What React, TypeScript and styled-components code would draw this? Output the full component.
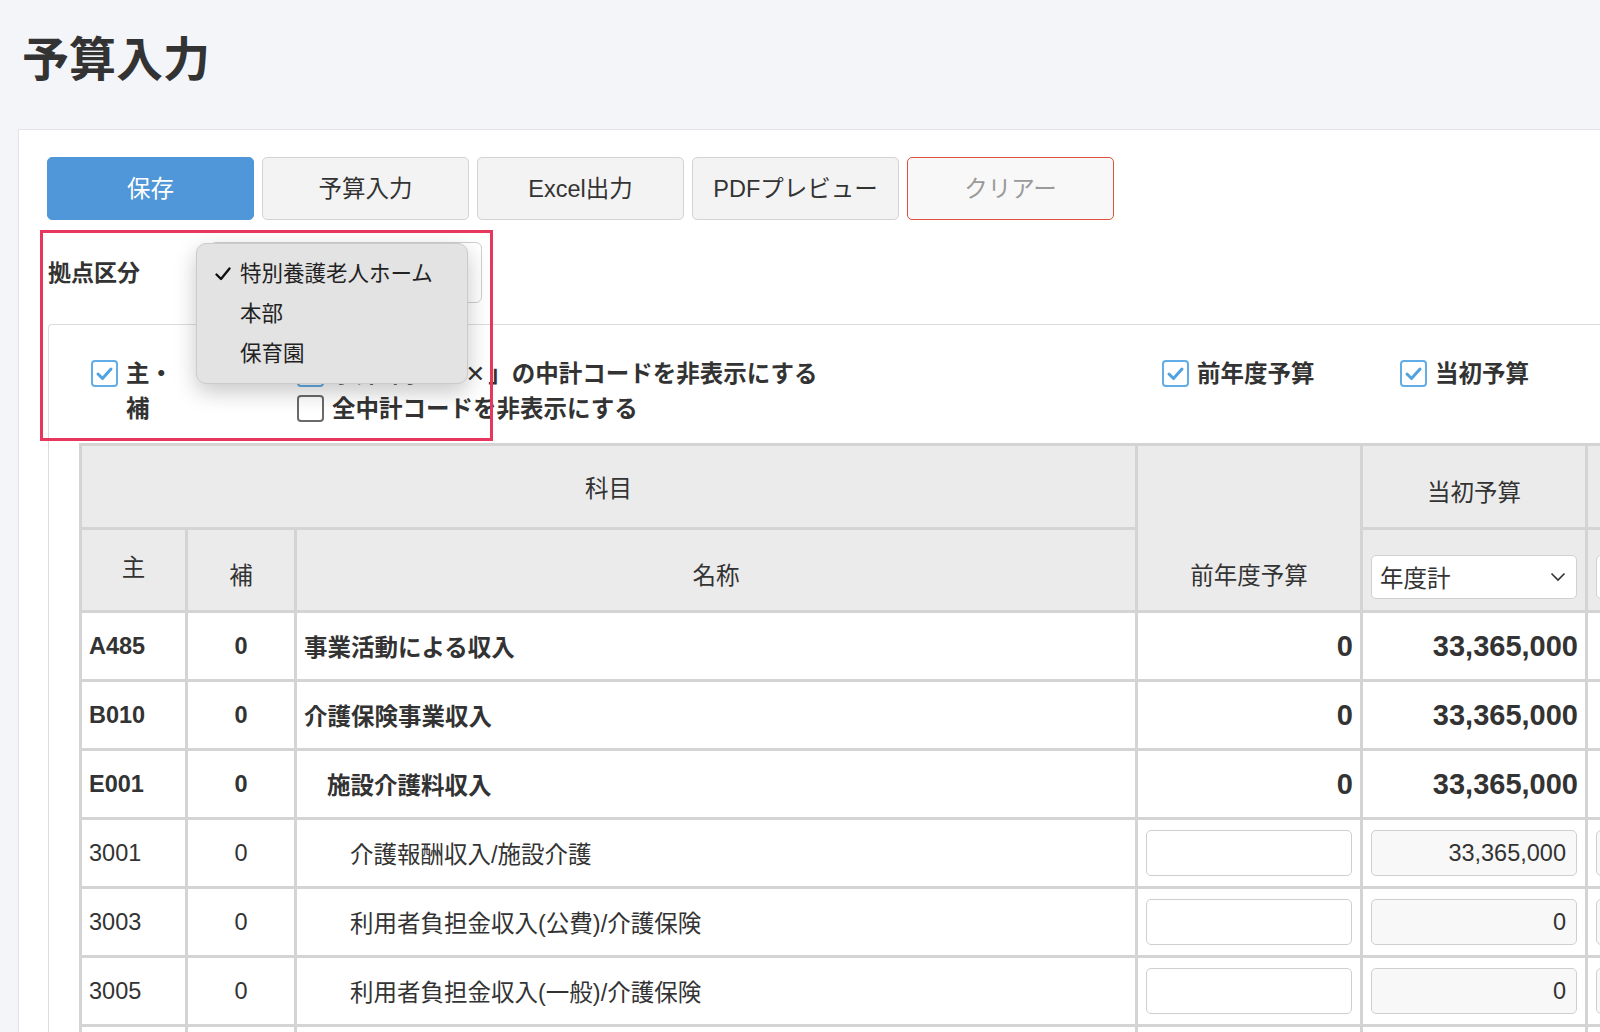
import React from "react";
import styled, { createGlobalStyle } from "styled-components";

const GlobalStyle = createGlobalStyle`
  html, body {
    margin: 0;
    padding: 0;
  }
  body {
    width: 1600px;
    height: 1032px;
    overflow: hidden;
    background: #f4f5f9;
    color: #333;
    font-family: "Liberation Sans", "Noto Sans CJK JP", sans-serif;
  }
`;

interface RowData {
  code: string;
  sub: string;
  name: string;
  level: number;
  prev: string;
  initial: string;
  total: boolean;
}

const rows: RowData[] = [
  { code: "A485", sub: "0", name: "事業活動による収入", level: 0, prev: "0", initial: "33,365,000", total: true },
  { code: "B010", sub: "0", name: "介護保険事業収入", level: 0, prev: "0", initial: "33,365,000", total: true },
  { code: "E001", sub: "0", name: "施設介護料収入", level: 1, prev: "0", initial: "33,365,000", total: true },
  { code: "3001", sub: "0", name: "介護報酬収入/施設介護", level: 2, prev: "", initial: "33,365,000", total: false },
  { code: "3003", sub: "0", name: "利用者負担金収入(公費)/介護保険", level: 2, prev: "", initial: "0", total: false },
  { code: "3005", sub: "0", name: "利用者負担金収入(一般)/介護保険", level: 2, prev: "", initial: "0", total: false },
  { code: "3007", sub: "0", name: "利用者等利用料収入/施設介護", level: 2, prev: "", initial: "0", total: false },
];

const Check = ({ on }: { on: boolean }) => (
  <Box $on={on}>
    {on && (
      <svg width="21" height="21" viewBox="0 0 21 21">
        <path d="M4 11 L8.5 15.5 L17 6" fill="none" stroke="#4fa3e0" strokeWidth="3" strokeLinecap="round" strokeLinejoin="round" />
      </svg>
    )}
  </Box>
);

const Chevron = () => (
  <svg width="16" height="10" viewBox="0 0 16 10">
    <path d="M1.5 1.5 L8 8 L14.5 1.5" fill="none" stroke="#333" strokeWidth="1.6" />
  </svg>
);

export default function App() {
  return (
    <Page>
      <GlobalStyle />
      <Title>予算入力</Title>
      <Card>
        <Toolbar>
          <Button $kind="primary">保存</Button>
          <Button>予算入力</Button>
          <Button>Excel出力</Button>
          <Button>PDFプレビュー</Button>
          <Button $kind="danger">クリアー</Button>
        </Toolbar>

        <SiteRow>
          <SiteLabel>拠点区分</SiteLabel>
          <SelectWrap>
            <SiteSelect>
              <span>特別養護老人ホーム</span>
              <Chevron />
            </SiteSelect>
            <Popup>
              <PopupItem>
                <Tick>
                  <svg width="18" height="18" viewBox="0 0 18 18">
                    <path d="M2.5 9.5 L7 14 L15.5 3.5" fill="none" stroke="#111" strokeWidth="2.4" strokeLinecap="round" strokeLinejoin="round" />
                  </svg>
                </Tick>
                特別養護老人ホーム
              </PopupItem>
              <PopupItem>本部</PopupItem>
              <PopupItem>保育園</PopupItem>
            </Popup>
          </SelectWrap>
        </SiteRow>

        <Panel>
          <Filters>
            <FilterCol $width={206}>
              <CheckLine>
                <Check on />
                <NarrowLabel>主・補</NarrowLabel>
              </CheckLine>
            </FilterCol>
            <FilterCol $width={865}>
              <CheckLine>
                <Check on />
                <CheckText>
                  予算0円で「<Cross>✕</Cross>」の中計コードを非表示にする
                </CheckText>
              </CheckLine>
              <CheckLine>
                <Check on={false} />
                <CheckText>全中計コードを非表示にする</CheckText>
              </CheckLine>
            </FilterCol>
            <FilterCol $width={238}>
              <CheckLine>
                <Check on />
                <CheckText>前年度予算</CheckText>
              </CheckLine>
            </FilterCol>
            <FilterCol $width={238}>
              <CheckLine>
                <Check on />
                <CheckText>当初予算</CheckText>
              </CheckLine>
            </FilterCol>
          </Filters>

          <Table>
            <colgroup>
              <col style={{ width: 106 }} />
              <col style={{ width: 109 }} />
              <col style={{ width: 841 }} />
              <col style={{ width: 225 }} />
              <col style={{ width: 225 }} />
              <col style={{ width: 225 }} />
            </colgroup>
            <thead>
              <tr>
                <Th colSpan={3} $middle>科目</Th>
                <Th rowSpan={2}>前年度予算</Th>
                <Th>当初予算</Th>
                <Th>補正予算</Th>
              </tr>
              <tr>
                <Th $middle $lift>主</Th>
                <Th>補</Th>
                <Th>名称</Th>
                <Th>
                  <PeriodSelect>
                    <span>年度計</span>
                    <Chevron />
                  </PeriodSelect>
                </Th>
                <Th>
                  <PeriodSelect>
                    <span>年度計</span>
                    <Chevron />
                  </PeriodSelect>
                </Th>
              </tr>
            </thead>
            <tbody>
              {rows.map((r) => (
                <tr key={r.code}>
                  <Td $bold={r.total}>{r.code}</Td>
                  <Td $bold={r.total} $align="center">{r.sub}</Td>
                  <Td $bold={r.total}>
                    <Indent $level={r.level}>{r.name}</Indent>
                  </Td>
                  {r.total ? (
                    <>
                      <Td $bold $big $align="right">{r.prev}</Td>
                      <Td $bold $big $align="right">{r.initial}</Td>
                      <Td $bold $big $align="right">{r.initial}</Td>
                    </>
                  ) : (
                    <>
                      <Td><AmountInput /></Td>
                      <Td><AmountInput $readonly>{r.initial}</AmountInput></Td>
                      <Td><AmountInput $readonly>{r.initial}</AmountInput></Td>
                    </>
                  )}
                </tr>
              ))}
            </tbody>
          </Table>
        </Panel>

        <Highlight />
      </Card>
    </Page>
  );
}

const Page = styled.div`
  padding: 32px 0 0 0;
`;

const Title = styled.h1`
  margin: 0 0 0 22px;
  font-size: 47px;
  line-height: 56px;
  font-weight: 700;
  color: #333;
`;

const Card = styled.section`
  position: relative;
  width: max-content;
  margin: 41px 0 0 18px;
  padding: 27px 0 0 28px;
  background: #fff;
  border: 1px solid #e2e3e6;
  border-right: none;
`;

const Toolbar = styled.div`
  display: flex;
  gap: 8px;
`;

const Button = styled.button<{ $kind?: "primary" | "danger" }>`
  width: 207px;
  height: 63px;
  padding: 0 0 4px;
  border-radius: 5px;
  font-family: inherit;
  font-size: 23.5px;
  cursor: pointer;
  background: ${(p) => (p.$kind === "primary" ? "#4f97d8" : p.$kind === "danger" ? "#f8f8f8" : "#f3f3f3")};
  color: ${(p) => (p.$kind === "primary" ? "#fff" : p.$kind === "danger" ? "#9a9a9a" : "#333")};
  border: 1.5px solid
    ${(p) => (p.$kind === "primary" ? "#4f97d8" : p.$kind === "danger" ? "#e0523d" : "#d3d3d3")};
`;

const SiteRow = styled.div`
  display: flex;
  align-items: center;
  margin-top: 22px;
  height: 61px;
`;

const SiteLabel = styled.div`
  width: 162px;
  padding: 0 0 4px 1px;
  font-size: 23px;
  font-weight: 700;
  color: #333;
`;

const SelectWrap = styled.div`
  position: relative;
`;

const SiteSelect = styled.div`
  width: 272px;
  height: 61px;
  box-sizing: border-box;
  display: flex;
  align-items: center;
  justify-content: space-between;
  padding: 0 12px 0 14px;
  border: 1px solid #cfcfcf;
  border-radius: 6px;
  background: #fff;
  font-size: 21px;
`;

const Popup = styled.div`
  position: absolute;
  left: -14px;
  top: 1px;
  width: 272px;
  box-sizing: border-box;
  padding: 10px 0 9px;
  border-radius: 10px;
  background: #e3e3e3;
  border: 1px solid #cbcbcb;
  box-shadow: 0 8px 22px rgba(0, 0, 0, 0.22);
  z-index: 3;
`;

const PopupItem = styled.div`
  position: relative;
  height: 40px;
  line-height: 40px;
  padding-left: 43px;
  font-size: 21.5px;
  color: #222;
`;

const Tick = styled.span`
  position: absolute;
  left: 17px;
  top: 11px;
  line-height: 0;
`;

const Panel = styled.div`
  margin: 21px 0 0 1px;
  border: 1px solid #dcdcdc;
  border-right: none;
  border-bottom: none;
  border-top-left-radius: 4px;
`;

const Filters = styled.div`
  display: flex;
  padding: 32px 0 16px 42px;
`;

const FilterCol = styled.div<{ $width: number }>`
  width: ${(p) => p.$width}px;
  display: flex;
  flex-direction: column;
`;

const CheckLine = styled.div`
  display: flex;
  align-items: flex-start;
  gap: 8px;
`;

const Box = styled.span<{ $on: boolean }>`
  flex: none;
  width: 27px;
  height: 27px;
  margin-top: 3px;
  box-sizing: border-box;
  display: flex;
  align-items: center;
  justify-content: center;
  border: 2px solid ${(p) => (p.$on ? "#62ade6" : "#6a6a6a")};
  border-radius: 4px;
  background: #fff;
`;

const CheckText = styled.span`
  font-size: 23.5px;
  line-height: 35px;
  font-weight: 700;
  color: #333;
  white-space: nowrap;
`;

const Cross = styled.span`
  font-family: "DejaVu Sans", sans-serif;
  font-weight: 400;
  padding: 0 3px;
`;

const NarrowLabel = styled(CheckText)`
  width: 52px;
  white-space: normal;
`;

const Table = styled.table`
  margin-left: 30px;
  border-collapse: collapse;
  table-layout: fixed;
  font-size: 23.5px;
  color: #333;
`;

const Th = styled.th<{ $middle?: boolean; $lift?: boolean }>`
  height: ${(p) => (p.$lift ? "58px" : "61px")};
  padding: ${(p) => (p.$lift ? "6px 8px 14px" : p.$middle ? "10px 8px" : "0 8px 19px")};
  background: #ebebeb;
  border: 3px solid #d4d4d4;
  font-weight: 400;
  text-align: center;
  vertical-align: ${(p) => (p.$middle ? "middle" : "bottom")};
  white-space: nowrap;
`;

const Td = styled.td<{ $bold?: boolean; $big?: boolean; $align?: "left" | "center" | "right" }>`
  height: 66px;
  padding: 0 7px;
  background: #fff;
  border: 3px solid #d4d4d4;
  text-align: ${(p) => p.$align || "left"};
  font-weight: ${(p) => (p.$bold ? 700 : 400)};
  font-size: ${(p) => (p.$big ? "29px" : "23.5px")};
  white-space: nowrap;
`;

const Indent = styled.span<{ $level: number }>`
  padding-left: ${(p) => p.$level * 23}px;
`;

const AmountInput = styled.div<{ $readonly?: boolean }>`
  height: 46px;
  box-sizing: border-box;
  margin: 0 1px;
  padding: 0 10px;
  display: flex;
  align-items: center;
  justify-content: flex-end;
  border: 1.5px solid #cfcfcf;
  border-radius: 5px;
  background: ${(p) => (p.$readonly ? "#f8f8f8" : "#fff")};
  font-size: 23.5px;
  color: #333;
`;

const PeriodSelect = styled.div`
  height: 44px;
  box-sizing: border-box;
  display: flex;
  align-items: center;
  justify-content: space-between;
  padding: 0 10px 0 8px;
  border: 1.5px solid #d0d0d0;
  border-radius: 5px;
  background: #fff;
  font-size: 23.5px;
  text-align: left;
  margin-bottom: -8px;
`;

const Highlight = styled.div`
  position: absolute;
  left: 21px;
  top: 100px;
  width: 453px;
  height: 211px;
  box-sizing: border-box;
  border: 3px solid #e8375f;
  pointer-events: none;
  z-index: 4;
`;
